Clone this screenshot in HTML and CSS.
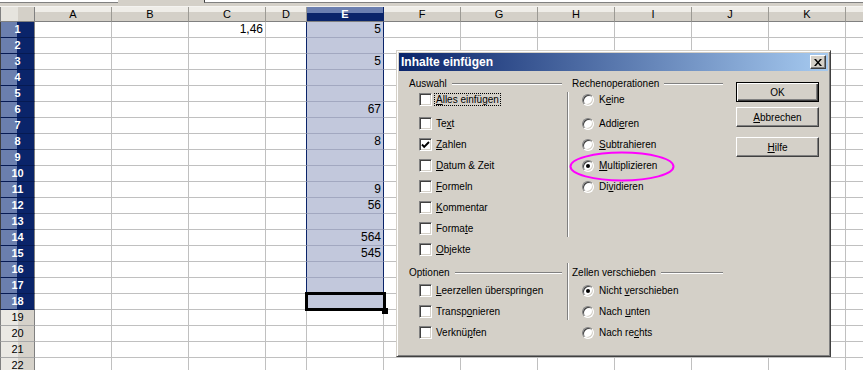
FILE: index.html
```html
<!DOCTYPE html>
<html lang="de">
    <head>
        <meta charset="UTF-8"/>
        <meta name="viewport" content="width=device-width, initial-scale=1.0"/>
        <title>Inhalte einfügen</title>
        <link rel="stylesheet" href="styles.css">
    </head>
    <body>
        <div class="toolbar">
            <span class="field name-box"></span>
            <span class="field formula"></span>
        </div>
        <div class="sheet" id="sheet"></div>

        <div class="dialog">
            <div class="titlebar">
                <span>Inhalte einfügen</span>
                <button class="close" aria-label="Schließen">
                    <svg width="8" height="7" viewBox="0 0 8 7"><path d="M0 0h2l2 2.4L6 0h2L5 3.5 8 7H6L4 4.6 2 7H0l3-3.5z" fill="#000"/></svg>
                </button>
            </div>
            <div class="dialog-body">
                <div class="panes">
                    <div class="section top">
                        <div class="group left">
                            <div class="group-head"><span>Auswahl</span></div>
                            <div class="options">
                                <div class="opt first"><span class="check"></span><label class="focus"><u>A</u>lles einfügen</label></div>
                                <div class="opt"><span class="check"></span><label>Te<u>x</u>t</label></div>
                                <div class="opt"><span class="check">
                                    <svg width="9" height="8" viewBox="0 0 9 8"><polyline points="1,3.5 3.2,5.8 8,1" fill="none" stroke="#000" stroke-width="1.9"/></svg>
                                </span><label><u>Z</u>ahlen</label></div>
                                <div class="opt"><span class="check"></span><label><u>D</u>atum &amp; Zeit</label></div>
                                <div class="opt"><span class="check"></span><label><u>F</u>ormeln</label></div>
                                <div class="opt"><span class="check"></span><label><u>K</u>ommentar</label></div>
                                <div class="opt"><span class="check"></span><label>Forma<u>t</u>e</label></div>
                                <div class="opt"><span class="check"></span><label><u>O</u>bjekte</label></div>
                            </div>
                        </div>
                        <div class="sep"></div>
                        <div class="group right">
                            <div class="group-head"><span>Rechenoperationen</span></div>
                            <div class="options">
                                <div class="opt first"><span class="radio"></span><label>K<u>e</u>ine</label></div>
                                <div class="opt"><span class="radio"></span><label>Addi<u>e</u>ren</label></div>
                                <div class="opt"><span class="radio"></span><label><u>S</u>ubtrahieren</label></div>
                                <div class="opt"><span class="radio on"></span><label><u>M</u>ultiplizieren</label></div>
                                <div class="opt"><span class="radio"></span><label>Di<u>v</u>idieren</label></div>
                            </div>
                        </div>
                    </div>
                    <div class="section bottom">
                        <div class="group left">
                            <div class="group-head"><span>Optionen</span></div>
                            <div class="options">
                                <div class="opt"><span class="check"></span><label><u>L</u>eerzellen überspringen</label></div>
                                <div class="opt"><span class="check"></span><label>Transp<u>o</u>nieren</label></div>
                                <div class="opt"><span class="check"></span><label>Verknü<u>p</u>fen</label></div>
                            </div>
                        </div>
                        <div class="sep"></div>
                        <div class="group right">
                            <div class="group-head"><span>Zellen verschieben</span></div>
                            <div class="options">
                                <div class="opt"><span class="radio on"></span><label>Nicht <u>v</u>erschieben</label></div>
                                <div class="opt"><span class="radio"></span><label>Nach <u>u</u>nten</label></div>
                                <div class="opt"><span class="radio"></span><label>Nach re<u>c</u>hts</label></div>
                            </div>
                        </div>
                    </div>
                </div>
                <div class="buttons">
                    <button class="default">OK</button>
                    <button><u>A</u>bbrechen</button>
                    <button class="help"><u>H</u>ilfe</button>
                </div>
            </div>
            <svg class="mark" width="106" height="32" viewBox="0 0 106 32">
                <ellipse cx="53" cy="15.5" rx="51.5" ry="14" fill="none" stroke="#ff00ff" stroke-width="2"/>
            </svg>
        </div>

        <script>
            const columns = ["A", "B", "C", "D", "E", "F", "G", "H", "I", "J", "K", ""];
            const values = {
                1: { C: "1,46", E: "5" },
                3: { E: "5" },
                6: { E: "67" },
                8: { E: "8" },
                11: { E: "9" },
                12: { E: "56" },
                14: { E: "564" },
                15: { E: "545" }
            };

            const sheet = document.getElementById("sheet");

            function addCell(className, text) {
                const cell = document.createElement("div");
                cell.className = className;
                cell.textContent = text;
                sheet.appendChild(cell);
            }

            addCell("corner", "");
            columns.forEach(col => addCell(col === "E" ? "col-head selected" : "col-head", col));

            for (let row = 1; row <= 22; row++) {
                const picked = row <= 18;
                addCell(picked ? "row-head selected" : "row-head", row);
                columns.forEach(col => {
                    let cls = "cell";
                    if (picked && col === "E") cls += " in-range";
                    if (picked && col === "D") cls += " range-edge";
                    if (row === 18 && col === "E") cls += " cursor";
                    addCell(cls, (values[row] && values[row][col]) || "");
                });
            }
        </script>
    </body>
</html>
```

FILE: styles.css
```css
body {
    margin: 0;
    width: 863px;
    height: 370px;
    overflow: hidden;
    position: relative;
    background: #fff;
    font-family: "Liberation Sans", Arial, sans-serif;
    color: #000;
}

/* strip of the toolbar above the sheet */
.toolbar {
    display: flex;
    align-items: flex-start;
    height: 7px;
    box-sizing: border-box;
    background: #d4d0c8;
    border-bottom: 1px solid #f4f3f0;
}

.field {
    height: 2px;
    background: #fff;
    border-bottom: 1px solid #808080;
}

.name-box {
    width: 118px;
}

.formula {
    flex: 1;
    margin-left: 86px;
    border-left: 1px solid #404040;
}

/* spreadsheet grid */
.sheet {
    display: grid;
    grid-template-columns: 35px 77px 77px 77px 41px 77px 77px 77px 77px 77px 77px 77px 18px;
    grid-template-rows: 15px;
    grid-auto-rows: 16px;
    font-size: 12px;
}

.sheet > div {
    box-sizing: border-box;
    border-right: 1px solid #c0c0c0;
    border-bottom: 1px solid #c0c0c0;
    overflow: hidden;
    white-space: nowrap;
}

.sheet > .corner {
    background: linear-gradient(to right, #e6e4de 17px, #d4d0c8 17px);
    border-left: 1px solid #808080;
    border-right-color: #808080;
    border-bottom-color: #808080;
}

.sheet > .col-head {
    background: linear-gradient(#efede8 0 5px, #d4d0c8 5px);
    border-right-color: #9c9a94;
    border-bottom-color: #808080;
    text-align: center;
    font-size: 11px;
    line-height: 14px;
}

.sheet > .col-head.selected {
    background: linear-gradient(#6b7fb0 0 6px, #0a246a 6px);
    border-right-color: #0a246a;
    color: #fff;
    font-weight: bold;
}

.sheet > .row-head {
    background: linear-gradient(to right, #ebe9e4 17px, #d6d2ca 17px);
    border-left: 1px solid #808080;
    border-right-color: #808080;
    border-bottom-color: #a8a8a8;
    text-align: center;
    font-size: 11px;
    line-height: 15px;
}

.sheet > .row-head.selected {
    background: linear-gradient(to right, #6b7fae 16px, #0a246a 16px);
    border-left-color: #404040;
    border-bottom-color: #061a52;
    color: #fff;
    font-weight: bold;
}

.sheet > .cell {
    text-align: right;
    padding-right: 2px;
    line-height: 15px;
}

.sheet > .cell.in-range {
    background: #c2c8dc;
    border-right-color: #0a246a;
    border-bottom-color: #a2a8c0;
}

.sheet > .cell.range-edge {
    border-right-color: #0a246a;
}

.sheet > .cell.cursor {
    position: relative;
    overflow: visible;
}

.cell.cursor::before {
    content: "";
    position: absolute;
    left: -2px;
    top: -2px;
    right: -3px;
    bottom: -2px;
    border: 3px solid #000;
}

.cell.cursor::after {
    content: "";
    position: absolute;
    right: -5px;
    bottom: -5px;
    width: 6px;
    height: 6px;
    background: #000;
}

/* dialog */
.dialog {
    position: absolute;
    left: 396px;
    top: 50px;
    width: 435px;
    height: 307px;
    box-sizing: border-box;
    padding: 2px;
    background: #d4d0c8;
    border: 1px solid;
    border-color: #d4d0c8 #404040 #404040 #d4d0c8;
    box-shadow: inset 1px 1px #fff, inset -1px -1px #808080;
    font-size: 10px;
}

.titlebar {
    display: flex;
    align-items: center;
    justify-content: space-between;
    height: 18px;
    padding-left: 2px;
    background: linear-gradient(to right, #0a246a, #a6caf0);
    color: #fff;
    font-size: 12px;
    font-weight: bold;
}

.close {
    display: flex;
    align-items: center;
    justify-content: center;
    width: 16px;
    height: 14px;
    margin-right: 2px;
    padding: 0;
    background: #d4d0c8;
    border: 1px solid;
    border-color: #fff #404040 #404040 #fff;
    box-shadow: inset -1px -1px #808080;
}

.dialog-body {
    display: flex;
    padding: 7px 0 0 10px;
}

.panes {
    width: 315px;
}

.section {
    display: flex;
}

.section.bottom {
    margin-top: 3px;
}

.group.left {
    width: 158px;
    box-sizing: border-box;
    padding-right: 5px;
}

.group.right {
    width: 155px;
    box-sizing: border-box;
    padding-left: 3px;
    padding-right: 1px;
}

.sep {
    width: 0;
    border-left: 1px solid #808080;
    border-right: 1px solid #fff;
}

.section.top .sep {
    margin-top: 14px;
    height: 145px;
}

.section.bottom .sep {
    height: 57px;
}

.group-head {
    display: flex;
    align-items: center;
    height: 12px;
    line-height: 12px;
    white-space: nowrap;
}

.group-head::after {
    content: "";
    flex: 1;
    height: 0;
    margin-left: 5px;
    border-top: 1px solid #808080;
    border-bottom: 1px solid #fff;
}

.section.bottom .group-head {
    margin-top: 4px;
}

.section.bottom .options {
    margin-top: 1px;
}

.group.left .options {
    padding-left: 10px;
}

.group.right .options {
    padding-left: 10px;
}

.opt {
    display: flex;
    align-items: center;
    height: 21px;
    white-space: nowrap;
}

.opt.first {
    margin-top: -1px;
    margin-bottom: 3px;
}

.opt label {
    margin-left: 2px;
    padding: 0 1px;
    border: 1px solid transparent;
    line-height: 11px;
}

.opt label.focus {
    border: 1px dotted #000;
}

.check {
    display: flex;
    align-items: center;
    justify-content: center;
    width: 13px;
    height: 13px;
    box-sizing: border-box;
    background: #fff;
    border: 1px solid;
    border-color: #808080 #fff #fff #808080;
    box-shadow: inset 1px 1px #404040, inset -1px -1px #d4d0c8;
}

.radio {
    position: relative;
    width: 12px;
    height: 12px;
    margin-right: 1px;
    box-sizing: border-box;
    border-radius: 50%;
    background: #fff;
    border: 1px solid;
    border-color: #808080 #fff #fff #808080;
    box-shadow: inset 1px 1px #404040, inset -1px -1px #d4d0c8;
}

.radio.on::after {
    content: "";
    position: absolute;
    left: 3px;
    top: 3px;
    width: 4px;
    height: 4px;
    border-radius: 50%;
    background: #000;
}

.buttons {
    display: flex;
    flex-direction: column;
    margin-left: 12px;
    padding-top: 4px;
}

.buttons button {
    width: 83px;
    height: 20px;
    margin-bottom: 5px;
    padding: 0;
    font: 10px "Liberation Sans", Arial, sans-serif;
    color: #000;
    background: #d4d0c8;
    border: 1px solid;
    border-color: #fff #404040 #404040 #fff;
    box-shadow: inset -1px -1px #808080;
}

.buttons button.default {
    border-color: #000;
    box-shadow: inset 1px 1px #fff, inset -1px -1px #404040, inset -2px -2px #808080;
}

.buttons button.help {
    margin-top: 5px;
}

.mark {
    position: absolute;
    left: 172px;
    top: 100px;
}
```
